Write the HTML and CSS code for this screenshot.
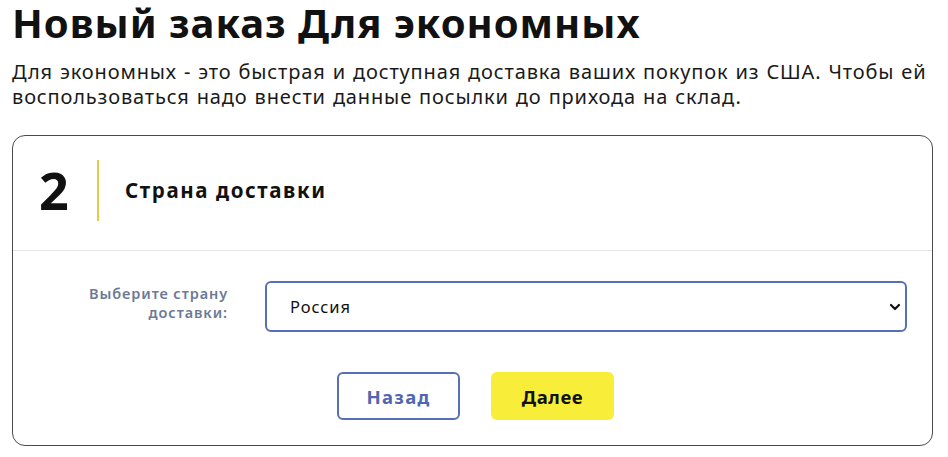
FILE: index.html
```html
<!DOCTYPE html>
<html lang="ru">
<head>
<meta charset="utf-8">
<link rel="stylesheet" href="styles.css">
</head>
<body>
<div class="page">
  <h1 class="title">Новый заказ Для экономных</h1>
  <p class="lead">Для экономных - это быстрая и доступная доставка ваших покупок из США. Чтобы ей воспользоваться надо внести данные посылки до прихода на склад.</p>
  <div class="card">
    <div class="card-head">
      <div class="step">2</div>
      <div class="step-line"></div>
      <div class="step-title">Страна доставки</div>
    </div>
    <div class="card-body">
      <div class="row">
        <label class="label" for="country">Выберите страну<br>доставки:</label>
        <div class="select-wrap">
          <select id="country" class="select"><option>Россия</option></select>
          <svg class="chev" width="12" height="8" viewBox="0 0 12 8"><path d="M2 2l4 4 4-4" fill="none" stroke="#111" stroke-width="2.2" stroke-linecap="round" stroke-linejoin="round"/></svg>
        </div>
      </div>
      <div class="buttons">
        <button class="btn btn-back">Назад</button>
        <button class="btn btn-next">Далее</button>
      </div>
    </div>
  </div>
</div>
</body>
</html>
```
FILE: styles.css
```css
* { box-sizing: border-box; }
html, body { margin: 0; padding: 0; background: #fff; }
body { font-family: "Noto Sans", "Open Sans", sans-serif; color: #111; }
.page { padding: 0 8px 0 12px; }
.title {
  margin: 0;
  font-size: 40px;
  line-height: 46px;
  font-weight: 700;
  letter-spacing: 1px;
  color: #111;
}
.lead {
  margin: 13px 0 0;
  font-size: 20px;
  line-height: 25px;
  letter-spacing: 0.85px;
  word-spacing: 1px;
  color: #1a1a1a;
}
.card {
  margin-top: 26px;
  width: 921px;
  height: 311px;
  border: 1.5px solid #4a4a4a;
  border-radius: 13px;
  overflow: hidden;
}
.card-head {
  display: flex;
  align-items: center;
  height: 115px;
  padding-left: 26px;
  border-bottom: 1px solid #e4e4e4;
}
.step {
  font-size: 52px;
  font-weight: 700;
  width: 58px;
  line-height: 1;
  margin-top: -6px;
  letter-spacing: 1px;
}
.step-line {
  width: 2px;
  height: 61px;
  background: #e8c94a;
  margin-top: -6px;
}
.step-title {
  margin-left: 26px;
  margin-top: -6px;
  font-size: 20.5px;
  font-weight: 700;
  letter-spacing: 1.6px;
}
.card-body { padding-top: 30px; }
.row { display: flex; align-items: center; }
.label {
  width: 215px;
  margin-bottom: 7px;
  text-align: right;
  font-size: 14.5px;
  line-height: 19px;
  font-weight: 600;
  letter-spacing: 0.9px;
  color: #6b7a96;
}
.select-wrap {
  position: relative;
  margin-left: 37px;
  width: 642px;
  height: 51px;
}
.select {
  appearance: none;
  -webkit-appearance: none;
  width: 100%;
  height: 100%;
  border: 2px solid #5570b4;
  border-radius: 6px;
  background: #fff;
  padding: 0 0 0 23px;
  font-family: "Noto Sans", "Open Sans", sans-serif;
  font-size: 16.5px;
  letter-spacing: 0.9px;
  color: #111;
}
.chev { position: absolute; right: 6px; top: 22px; pointer-events: none; }
.buttons {
  display: flex;
  justify-content: center;
  gap: 31px;
  margin-top: 40px;
  padding-left: 6px;
}
.btn {
  width: 123px;
  height: 48px;
  border-radius: 6px;
  font-family: "Noto Sans", "Open Sans", sans-serif;
  font-size: 18.5px;
  font-weight: 700;
  letter-spacing: 1.3px;
  cursor: pointer;
}
.btn-back { background: #fff; border: 2px solid #5570b4; color: #4f67b2; }
.btn-next { background: #f8ee3a; border: none; color: #111; letter-spacing: 0.6px; }
```
